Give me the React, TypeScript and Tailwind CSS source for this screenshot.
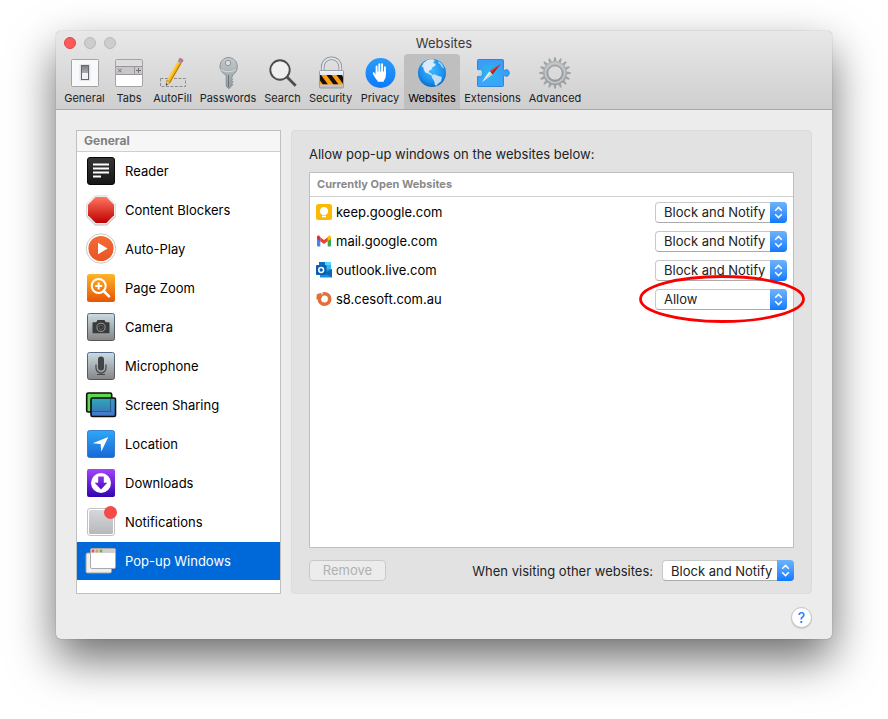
import React, { useState } from 'react';

type IconProps = { children: React.ReactNode };

const ToolIcon = ({ children }: IconProps) => (
  <svg className="block size-9 shrink-0" viewBox="0 0 36 36" fill="none" aria-hidden="true">
    {children}
  </svg>
);

const SideIcon = ({ children }: IconProps) => (
  <svg className="block size-8 shrink-0 overflow-visible" viewBox="0 0 32 32" fill="none" aria-hidden="true">
    {children}
  </svg>
);

const SiteIcon = ({ children }: IconProps) => (
  <svg className="block size-4 shrink-0" viewBox="0 0 16 16" fill="none" aria-hidden="true">
    {children}
  </svg>
);

type GradProps = { id: string; from: string; to: string };

const Grad = ({ id, from, to }: GradProps) => (
  <linearGradient id={id} x1="0" y1="0" x2="0" y2="1">
    <stop offset="0" stopColor={from} />
    <stop offset="1" stopColor={to} />
  </linearGradient>
);

const gearTeeth = Array.from({ length: 16 }, (_, i) => i * 22.5);

const tools = [
  {
    name: 'General',
    width: 'w-[49px]',
    icon: (
      <ToolIcon>
        <Grad id="sw" from="#7b7f83" to="#d4d6d8" />
        <rect x="4.5" y="4.5" width="27" height="27" rx="1" fill="#f8f9fa" stroke="#a3a3a3" />
        <rect x="12.5" y="9" width="11" height="17" rx="1.5" fill="#e3e5e7" />
        <rect x="14.5" y="10.5" width="7" height="14" fill="url(#sw)" stroke="#63676b" />
        <rect x="15" y="18" width="6" height="6" fill="#f1f2f3" />
      </ToolIcon>
    ),
  },
  {
    name: 'Tabs',
    width: 'w-10',
    icon: (
      <ToolIcon>
        <rect x="4.5" y="4.5" width="27" height="27" rx="1.5" fill="#fff" stroke="#a3a3a3" />
        <rect x="5" y="5" width="26" height="6.5" fill="#dedcde" />
        <rect x="5" y="11" width="26" height="8.5" fill="#c9c7c9" />
        <path d="M5 11.5H31M5 19.5H31M23.5 11.5v8" stroke="#979597" />
        <path d="M7 13.7l3.6 3.6M10.6 13.7L7 17.3" stroke="#727072" />
        <path d="M25 15.5h5M27.5 13v5" stroke="#727072" />
      </ToolIcon>
    ),
  },
  {
    name: 'AutoFill',
    width: 'w-[47px]',
    icon: (
      <ToolIcon>
        <rect x="5.5" y="23.5" width="25" height="8" stroke="#8c8c8c" strokeDasharray="3 1.5" />
        <path d="M11 30.5l.8-5.2L22.7 6.5l3.7 2.2L15.5 27.5z" fill="#f9b916" />
        <path d="M14.9 27.2L25.8 8.3" stroke="#b47a07" strokeWidth="1.1" />
        <path d="M12.7 25.3L23.3 7" stroke="#ffd95c" strokeWidth="1" />
        <path d="M11 30.5l.8-5.2 3.7 2.2z" fill="#e6c49a" stroke="#8b6a3c" strokeWidth=".5" />
        <path d="M11 30.5l.3-2 1.3.8z" fill="#222" />
        <path d="M22.7 6.5l1.2-2 3.7 2.2-1.2 2z" fill="#8f9aa6" />
        <path d="M23.9 4.5l.7-1.1c.4-.7 3.9 1.2 3.5 2.1l-.5 1.2z" fill="#e0708f" stroke="#ac5069" strokeWidth=".5" />
      </ToolIcon>
    ),
  },
  {
    name: 'Passwords',
    width: 'w-16',
    icon: (
      <ToolIcon>
        <Grad id="key" from="#c3cacd" to="#929b9f" />
        <path
          fillRule="evenodd"
          d="M18 2.5c5.300 0 9.300 3.800 9.300 9 0 4.200-2.200 7.200-4.900 8.500v1.800l-1 1 1.200 1.300-.9 1.200 1.300 1.400-1.200 1.600 1 1.200-1.200 1.600-2.700 2.600-2.700-2.500V20c-3.300-1.400-6.200-4.300-6.200-8.500 0-5.200 4-9 8.300-9zM18 5.300a2.700 2.700 0 100 5.400 2.700 2.700 0 000-5.400z"
          fill="url(#key)"
          stroke="#7b858a"
          strokeWidth=".8"
        />
        <path d="M18.500 20v12" stroke="#69747a" strokeWidth="1" />
        <path d="M10.500 14.500c3 3 12 3 15.200 0" stroke="#d9dee0" strokeWidth=".9" />
      </ToolIcon>
    ),
  },
  {
    name: 'Search',
    width: 'w-[45px]',
    icon: (
      <ToolIcon>
        <circle cx="15" cy="15" r="9.700" fill="#fff" fillOpacity=".55" stroke="#4d4d4d" strokeWidth="1.900" />
        <path d="M22 22l8.700 8.700" stroke="#4d4d4d" strokeWidth="2.800" />
      </ToolIcon>
    ),
  },
  {
    name: 'Security',
    width: 'w-[51px]',
    icon: (
      <ToolIcon>
        <Grad id="lock" from="#f2f4f8" to="#b8bec9" />
        <clipPath id="band">
          <rect x="7" y="20" width="23" height="9.500" />
        </clipPath>
        <path d="M9.700 16v-4a8.800 8.800 0 0117.600 0v4" stroke="#858b96" strokeWidth="3.600" />
        <path d="M9.700 16v-4a8.800 8.800 0 0117.600 0v4" stroke="#dfe3ea" strokeWidth="2" />
        <rect x="6.500" y="15.500" width="24" height="17.500" rx="1" fill="url(#lock)" stroke="#8b919b" strokeWidth=".8" />
        <rect x="7" y="20" width="23" height="9.500" fill="#ff9b0d" />
        <path
          clipPath="url(#band)"
          d="M3 20h5l7 9.500h-5zM13.500 20h5l7 9.500h-5zM23.500 20h5l7 9.500h-5z"
          fill="#111"
        />
      </ToolIcon>
    ),
  },
  {
    name: 'Privacy',
    width: 'w-12',
    icon: (
      <ToolIcon>
        <Grad id="priv" from="#2a9bfb" to="#0d7bfa" />
        <circle cx="18.500" cy="18" r="15" fill="url(#priv)" />
        <path d="M14.600 18v-6.500M17.300 17V9.200M20.100 17V9.200M22.900 18.500v-6.300" stroke="#fff" strokeWidth="1.900" strokeLinecap="round" />
        <path
          d="M13.700 16.500h10.150v3.800c0 1.900-.6 3.300-1.400 4.400-.6.800-.7 1.300-.7 2.100h-6c-.2-1.300-1.300-2-2.300-3.500-1-1.600-2.100-3.300-2.700-4.700-.4-1.300 1-1.900 1.800-.8l1.150 2z"
          fill="#fff"
        />
      </ToolIcon>
    ),
  },
  {
    name: 'Websites',
    width: 'w-14',
    icon: (
      <ToolIcon>
        <radialGradient id="globe" cx=".5" cy=".4" r=".65">
          <stop offset="0" stopColor="#3cb8ff" />
          <stop offset=".65" stopColor="#1c90ec" />
          <stop offset="1" stopColor="#0b5fbb" />
        </radialGradient>
        <circle cx="18" cy="18" r="14" fill="url(#globe)" />
        <path
          d="M9.500 8l3.500-2.800 3.200-.9 3.500.3 1.300 1.400-1.800 1 .8 1.400 1.800.3-.6 2-2.700 1.500-1 2.200-2.300 1.300-.6 1.600 2.300.9 1.400 1.800-1.200.3-3-1.900-2.800-1-1.600-2.800-.5-2.900-1.700.5z"
          fill="#d9ebf8"
        />
        <path d="M17.500 20l3-.8 3.300 1.500 4.100 1.400-.8 4.100-3.100 2.500-1.600 2-1.500-.8-.7-4-2.300-3.200z" fill="#c0dff7" />
        <path d="M24.500 6l3.500 3 2.200 4.300-2.200-.8-1.800-3-2-1.500z" fill="#a3d2f5" />
      </ToolIcon>
    ),
  },
  {
    name: 'Extensions',
    width: 'w-[65px]',
    icon: (
      <ToolIcon>
        <Grad id="ext" from="#3a9cf8" to="#3aa5fb" />
        <radialGradient id="compass">
          <stop offset="0" stopColor="#20bdf0" />
          <stop offset="1" stopColor="#20bdf0" stopOpacity="0" />
        </radialGradient>
        <path
          d="M3.500 4.500h24a1 1 0 011 1v9c0 1 1 1 1.800.6 2-1.200 3.900.4 3.900 2.900s-1.900 4.100-3.900 2.900c-.8-.4-1.800-.4-1.800.6v9a1 1 0 01-1 1h-24a1 1 0 01-1-1v-8.500c0-1 .8-1 1.600-.6 2 .9 3.600-.9 3.600-3.400s-1.600-4.300-3.600-3.400c-.8.4-1.600.4-1.600-.6V5.500a1 1 0 011-1z"
          fill="url(#ext)"
          stroke="#1878d2"
          strokeWidth=".8"
        />
        <circle cx="15.500" cy="18" r="12" fill="url(#compass)" />
        <path d="M25.500 9l-11.200 7.300 3.200 3.300z" fill="#ee3328" />
        <path d="M25.500 9l-9.600 8.900 1.600 1.700z" fill="#b71d1a" />
        <path d="M6.800 27.300l7.500-11 3.200 3.300z" fill="#f5f5f5" />
        <path d="M6.800 27.300l9.100-9.400 1.600 1.700z" fill="#c5cbd0" />
      </ToolIcon>
    ),
  },
  {
    name: 'Advanced',
    width: 'w-[60px]',
    icon: (
      <ToolIcon>
        <Grad id="gear" from="#b5b9bc" to="#969b9e" />
        {gearTeeth.map((angle) => (
          <path
            key={angle}
            d="M16.400 6.500l.9-4.300h1.400l.9 4.300z"
            fill="#9ea3a6"
            transform={`rotate(${angle} 18 18)`}
          />
        ))}
        <circle cx="18" cy="18" r="9.600" stroke="url(#gear)" strokeWidth="4.600" />
        <circle cx="18" cy="18" r="9.700" stroke="#c4c8ca" strokeWidth="1.500" />
        <circle cx="18" cy="18" r="7.200" stroke="#85898c" strokeWidth=".8" />
      </ToolIcon>
    ),
  },
];

const sections = [
  {
    name: 'Reader',
    icon: (
      <SideIcon>
        <Grad id="reader" from="#363636" to="#161616" />
        <rect x="2.500" y="2.500" width="27" height="27" rx="2.500" fill="url(#reader)" stroke="#080808" />
        <path d="M8 9.500h16M8 13.500h16M8 17.500h16M8 21.500h8" stroke="#fff" strokeWidth="1.800" />
      </SideIcon>
    ),
  },
  {
    name: 'Content Blockers',
    icon: (
      <SideIcon>
        <Grad id="stop" from="#ff7560" to="#bd0000" />
        <path d="M10 2.500h12l8.500 8.500v12L22 31.500H10L1.500 23V11z" fill="#b9b9b9" />
        <path d="M10 1.500h12l8.500 8.500v12L22 30.500H10L1.500 22V10z" fill="#ededed" stroke="#d5d5d5" strokeWidth=".5" />
        <path d="M10.700 3h10.600L29 10.700v10.600L21.300 29H10.700L3 21.300V10.700z" fill="url(#stop)" />
      </SideIcon>
    ),
  },
  {
    name: 'Auto-Play',
    icon: (
      <SideIcon>
        <Grad id="play" from="#f36c35" to="#ea5425" />
        <circle cx="16" cy="15.500" r="14.700" fill="#fff" stroke="#c9c9c9" />
        <circle cx="16" cy="15.500" r="12.600" fill="url(#play)" />
        <path d="M13 9.700l9.600 5.800L13 21.300z" fill="#fff" />
      </SideIcon>
    ),
  },
  {
    name: 'Page Zoom',
    icon: (
      <SideIcon>
        <Grad id="zoom" from="#feb52b" to="#e65300" />
        <rect x="2" y="2" width="28" height="28" rx="2.500" fill="url(#zoom)" />
        <circle cx="13.700" cy="14" r="7" stroke="#fff" strokeWidth="2" />
        <path d="M18.700 19l5.300 5.300" stroke="#fff" strokeWidth="2.600" strokeLinecap="round" />
        <path d="M13.700 10.500v7M10.200 14h7" stroke="#fff" strokeWidth="2" />
      </SideIcon>
    ),
  },
  {
    name: 'Camera',
    icon: (
      <SideIcon>
        <Grad id="cam" from="#cbdce3" to="#858585" />
        <Grad id="camEdge" from="#52698a" to="#555" />
        <rect x="2.500" y="2.500" width="27" height="27" rx="2" fill="url(#cam)" stroke="url(#camEdge)" />
        <path
          d="M8.500 11.300h2.700l1.400-2.300h6.800l1.400 2.300h2.700c.7 0 1 .4 1 1v8.900c0 .6-.3 1-1 1h-15c-.7 0-1-.4-1-1v-8.900c0-.6.3-1 1-1z"
          fill="#3a3a3a"
        />
        <circle cx="16" cy="16.300" r="4.100" fill="#333" stroke="#999fa1" />
        <circle cx="16" cy="16.300" r="2.100" stroke="#6d7173" strokeWidth=".7" />
      </SideIcon>
    ),
  },
  {
    name: 'Microphone',
    icon: (
      <SideIcon>
        <Grad id="mic" from="#cbdce3" to="#858585" />
        <Grad id="micEdge" from="#52698a" to="#555" />
        <rect x="2.500" y="2.500" width="27" height="27" rx="2" fill="url(#mic)" stroke="url(#micEdge)" />
        <rect x="13" y="6.500" width="6" height="14" rx="3" fill="#444" />
        <path d="M11 14.500v3.500a5 5 0 0010 0v-3.500M16 23v2M12 24.500h8" stroke="#444" strokeWidth="1.200" />
      </SideIcon>
    ),
  },
  {
    name: 'Screen Sharing',
    icon: (
      <SideIcon>
        <Grad id="green" from="#59d94a" to="#65d855" />
        <Grad id="blue" from="#2fa9b8" to="#3d69b8" />
        <rect x="1.700" y="4" width="25" height="19" rx="1.500" fill="url(#green)" stroke="#0c0c0c" strokeWidth="1.600" />
        <rect x="6" y="9" width="24.500" height="18.500" rx="1.500" fill="url(#blue)" stroke="#0c0c0c" strokeWidth="1.600" />
        <path d="M7 22.500h18.500V10" stroke="#1f5f8a" strokeWidth="1" />
        <path d="M27 10.200v12.800H7.200v3.300h22.100V10.200z" fill="#4a85d5" fillOpacity=".55" />
      </SideIcon>
    ),
  },
  {
    name: 'Location',
    icon: (
      <SideIcon>
        <Grad id="loc" from="#2fa8f8" to="#1768d6" />
        <rect x="2.500" y="2.500" width="27" height="27" rx="2" fill="url(#loc)" stroke="#155fbd" strokeOpacity=".7" />
        <path d="M23.300 9L7.700 15.200l7.900.9.700 7.500z" fill="#fff" />
      </SideIcon>
    ),
  },
  {
    name: 'Downloads',
    icon: (
      <SideIcon>
        <Grad id="down" from="#a143fa" to="#3303b0" />
        <Grad id="arrow" from="#8a2fea" to="#4f0fc0" />
        <rect x="2" y="2" width="28" height="28" rx="2" fill="url(#down)" />
        <circle cx="16" cy="16" r="10" fill="#fff" />
        <path d="M13.200 9.500h5.600v6.200h3.500L16 22.500l-6.300-6.800h3.500z" fill="url(#arrow)" />
      </SideIcon>
    ),
  },
  {
    name: 'Notifications',
    icon: (
      <SideIcon>
        <Grad id="notif" from="#d6d7db" to="#b7b8ba" />
        <rect x="2.500" y="2.500" width="27" height="27" rx="2.500" fill="#fff" stroke="#c2c2c2" />
        <rect x="4" y="4" width="24" height="24" rx="1.500" fill="url(#notif)" />
        <circle cx="25.500" cy="6.500" r="6.500" fill="#f44b48" />
      </SideIcon>
    ),
  },
  {
    name: 'Pop-up Windows',
    icon: (
      <SideIcon>
        <rect x="1" y="8" width="25.500" height="20" rx="1.500" fill="#efefef" stroke="#9f9f9f" />
        <rect x="5.500" y="3.500" width="25" height="20" rx="1.500" fill="#fff" stroke="#a9a9a9" />
        <path d="M6 8V5a1 1 0 011-1h22a1 1 0 011 1v3z" fill="#cfcfcf" />
        <circle cx="8" cy="6" r="1.400" fill="#e9564b" />
        <circle cx="12" cy="6" r="1.400" fill="#e8a23b" />
        <circle cx="16" cy="6" r="1.400" fill="#58b748" />
      </SideIcon>
    ),
  },
];

const sites = [
  {
    host: 'keep.google.com',
    policy: 'Block and Notify',
    marked: false,
    icon: (
      <SiteIcon>
        <rect width="16" height="16" rx="2.500" fill="#fbb904" />
        <path d="M8 3a4 4 0 00-2 7.500v.8h4v-.8A4 4 0 008 3z" fill="#fff" />
        <path d="M6 12h4v1.200H6z" fill="#fff" />
      </SiteIcon>
    ),
  },
  {
    host: 'mail.google.com',
    policy: 'Block and Notify',
    marked: false,
    icon: (
      <SiteIcon>
        <path d="M1 4.500l3.300 2.300V13.500H2a1 1 0 01-1-1z" fill="#4285f4" />
        <path d="M15 4.500l-3.300 2.300V13.500H14a1 1 0 001-1z" fill="#34a853" />
        <path d="M11.700 4.200v4L15 5.700V4.200c0-1.500-1.500-2-2.500-1.200z" fill="#fbbc04" />
        <path d="M4.300 8.200v-4L8 7l3.700-2.800v4L8 11z" fill="#ea4335" />
        <path d="M1 4.200v1.500l3.300 2.500v-4L3.500 3C2.500 2.200 1 2.700 1 4.200z" fill="#d5303a" />
      </SiteIcon>
    ),
  },
  {
    host: 'outlook.live.com',
    policy: 'Block and Notify',
    marked: false,
    icon: (
      <SiteIcon>
        <path d="M3 0h6.500v7H3z" fill="#0d6cbd" />
        <path d="M9 0h6v8H9z" fill="#35b8f1" />
        <path d="M9 0h6v3H9z" fill="#50d9ff" />
        <path d="M4 8l12-1v8.500H4z" fill="#1a8fdc" />
        <path d="M16 7v8.500L9 11z" fill="#1066b5" />
        <rect y="3" width="10.500" height="10" rx=".8" fill="#0a5fb0" />
        <circle cx="5.200" cy="8" r="2.400" stroke="#fff" strokeWidth="1.500" />
      </SiteIcon>
    ),
  },
  {
    host: 's8.cesoft.com.au',
    policy: 'Allow',
    marked: true,
    icon: (
      <SiteIcon>
        <circle cx="8.500" cy="8" r="5.200" stroke="#e2703a" strokeWidth="3.600" />
        <path d="M.8 3.300L4.500 2l2 3-2 3.500L.3 8.300z" fill="#e2703a" />
        <path d="M5.500.3l.8 3.200" stroke="#fff" strokeWidth="1.100" />
      </SiteIcon>
    ),
  },
];

type PopUpProps = { id?: string; label?: string; initial: string };

function PopUpSelect({ id, label, initial }: PopUpProps) {
  const [value, setValue] = useState(initial);
  return (
    <div className="relative h-[21px] w-[132px]">
      <select
        id={id}
        aria-label={label}
        value={value}
        onChange={(e) => setValue(e.target.value)}
        className="block h-full w-full appearance-none rounded border border-[#c8c8c8] border-b-[#ababab] bg-white pl-2 text-[13px] leading-[18px] text-[#222] outline-none"
      >
        <option>Block and Notify</option>
        <option>Block</option>
        <option>Allow</option>
      </select>
      <span className="pointer-events-none absolute inset-y-0 right-0 flex w-[17px] items-center justify-center rounded-r bg-linear-to-b from-[#6db3fa] to-[#0a7aff]">
        <svg width="9" height="13" viewBox="0 0 9 13" fill="none" stroke="#fff" strokeWidth="1.500" aria-hidden="true">
          <path d="M1.200 4.700l3.300-3.300 3.300 3.300M1.200 8.300l3.300 3.300 3.300-3.300" />
        </svg>
      </span>
    </div>
  );
}

export default function App() {
  const [section, setSection] = useState('Pop-up Windows');

  return (
    <div className="min-h-screen bg-white px-14 pt-[31px] pb-20 font-['Inter','Liberation_Sans',sans-serif] text-[13px] leading-4 text-[#222]">
      <main className="overflow-hidden rounded-[5px] bg-[#ececec] shadow-[0_0_1px_rgba(0,0,0,0.5),0_20px_46px_rgba(0,0,0,0.58)]">
        <header className="border-b border-[#a8a8a8] bg-linear-to-b from-[#e8e8e8] to-[#cfcfcf]">
          <div className="grid h-[23px] grid-cols-[1fr_auto_1fr] items-center px-2">
            <div className="flex gap-2">
              <button aria-label="Close" className="size-3 rounded-full border border-[#df4744] bg-[#fc5b57]" />
              <button aria-label="Minimize" className="size-3 rounded-full border border-[#b9b9b9] bg-[#cdcdcd]" />
              <button aria-label="Zoom" className="size-3 rounded-full border border-[#b9b9b9] bg-[#cdcdcd]" />
            </div>
            <h1 className="text-[#3a3a3a]">Websites</h1>
          </div>
          <nav className="flex px-1" aria-label="Preferences">
            {tools.map((tool) => (
              <button
                key={tool.name}
                className={`${tool.width} ${
                  tool.name === 'Websites' ? 'bg-[#bfbfbf] text-black' : ''
                } flex h-[55px] shrink-0 flex-col items-center rounded-t pt-px text-[11px] leading-[14px] whitespace-nowrap`}
              >
                {tool.icon}
                {tool.name}
              </button>
            ))}
          </nav>
        </header>

        <div className="flex gap-[10px] px-5 pt-5">
          <aside className="w-[205px] shrink-0 border border-[#c0c0c0] bg-white pb-[13px]">
            <h2 className="h-[21px] border-b border-[#cfcfcf] bg-[#f6f6f6] pl-[7px] text-xs leading-5 font-bold text-[#808080]">
              General
            </h2>
            <ul className="flex flex-col gap-px">
              {sections.map((item) => (
                <li key={item.name}>
                  <button
                    onClick={() => setSection(item.name)}
                    className={`flex h-[38px] w-full items-center gap-2 pl-2 ${
                      section === item.name ? 'bg-[#0069d9] text-white' : 'text-black'
                    }`}
                  >
                    {item.icon}
                    {item.name}
                  </button>
                </li>
              ))}
            </ul>
          </aside>

          <section className="flex min-w-0 grow flex-col rounded border border-[#dcdcdc] bg-[#e2e2e2] px-[17px] pt-[15px] pb-3">
            <p>Allow pop-up windows on the websites below:</p>
            <div className="mt-[10px] grow border border-[#bfbfbf] bg-white">
              <table className="w-full border-collapse text-left">
                <thead>
                  <tr className="border-b border-[#cfcfcf]">
                    <th colSpan={2} className="h-[23px] pl-[7px] text-[11px] font-bold text-[#8a8a8a]">
                      Currently Open Websites
                    </th>
                  </tr>
                </thead>
                <tbody className="before:block before:h-px">
                  {sites.map((site) => (
                    <tr key={site.host} className="h-[29px] text-black">
                      <td className="pl-[6px]">
                        <span className="flex items-center gap-1">
                          {site.icon}
                          {site.host}
                        </span>
                      </td>
                      <td className="w-[138px] pr-[6px]">
                        <div className="relative">
                          <PopUpSelect label={`Pop-up policy for ${site.host}`} initial={site.policy} />
                          {site.marked && (
                            <svg
                              className="pointer-events-none absolute -top-[14px] -left-4"
                              width="166"
                              height="48"
                              viewBox="0 0 166 48"
                              fill="none"
                              aria-hidden="true"
                            >
                              <ellipse cx="83" cy="24" rx="81.500" ry="22.500" stroke="#fa0000" strokeWidth="2.800" />
                            </svg>
                          )}
                        </div>
                      </td>
                    </tr>
                  ))}
                </tbody>
              </table>
            </div>
            <div className="mt-3 flex items-center justify-between">
              <button
                disabled
                className="h-[21px] w-[77px] rounded border border-[#c8c8c8] bg-[#ececec] leading-[19px] text-[#b0b0b0]"
              >
                Remove
              </button>
              <div className="flex items-center gap-[9px]">
                <label htmlFor="other-sites">When visiting other websites:</label>
                <PopUpSelect id="other-sites" initial="Block and Notify" />
              </div>
            </div>
          </section>
        </div>

        <footer className="flex justify-end px-5 pt-[13px] pb-[11px]">
          <button
            aria-label="Help"
            className="size-[21px] rounded-full border border-[#c3c3c3] bg-white text-sm leading-[19px] font-medium text-[#1a82fb] shadow-[0_1px_1px_rgba(0,0,0,0.15)]"
          >
            ?
          </button>
        </footer>
      </main>
    </div>
  );
}
